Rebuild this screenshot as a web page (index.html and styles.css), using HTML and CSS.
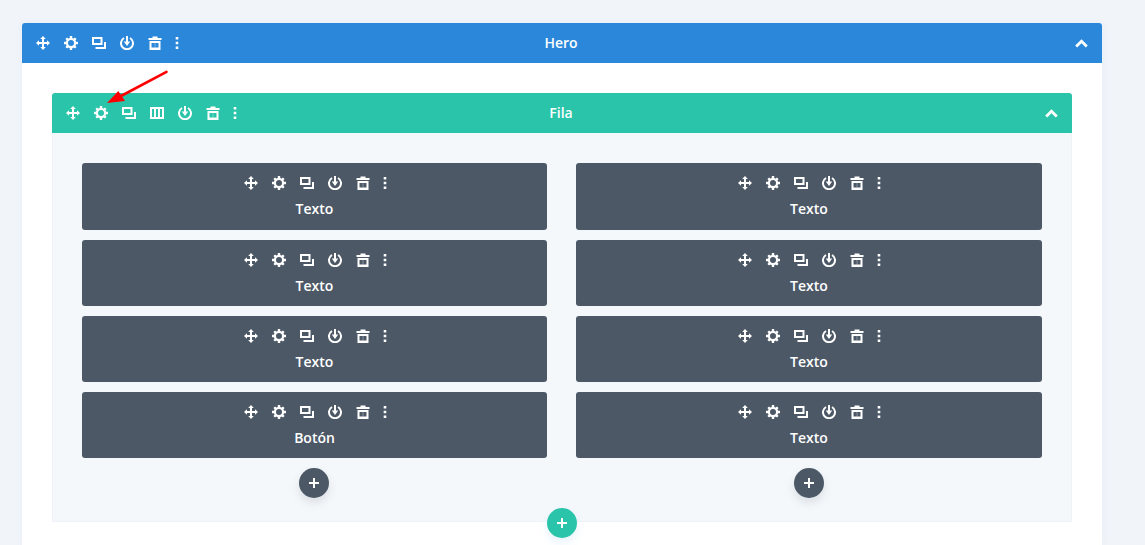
FILE: index.html
```html
<!DOCTYPE html>
<html lang="es">
<head>
<meta charset="utf-8">
<title>Hero</title>
<link rel="stylesheet" href="styles.css">
</head>
<body>
<svg class="defs" width="0" height="0" aria-hidden="true">
  <symbol id="i-move" viewBox="0 0 14 14">
    <path d="M6 3h2v3h3V4.200L14 7l-3 2.800V8H8v3h1.800L7 14l-2.800-3H6V8H3v1.800L0 7l3-2.800V6h3V3H4.200L7 0l2.800 3z" fill="currentColor"/>
  </symbol>
  <symbol id="i-gear" viewBox="0 0 14 14">
    <circle cx="7" cy="7" r="4.100" fill="none" stroke="currentColor" stroke-width="2.200"/>
    <path d="M5.800 0h2.400v3H5.800zM5.800 11h2.400v3H5.800zM0 5.800h3v2.400H0zM11 5.800h3v2.400h-3z" fill="currentColor"/>
    <path d="M1.400 3.100l1.700-1.700 2.100 2.100-1.700 1.700zM8.800 10.500l1.700-1.700 2.100 2.100-1.700 1.700zM10.900 1.400l1.700 1.700-2.100 2.100-1.700-1.700zM3.500 8.800l1.700 1.700-2.100 2.100-1.700-1.700z" fill="currentColor"/>
  </symbol>
  <symbol id="i-copy" viewBox="0 0 14 14">
    <path fill-rule="evenodd" d="M0 1h10.500v8H0zM2 3v4h6.500V3z" fill="currentColor"/>
    <path d="M12 6h2v7H3.500v-2H12z" fill="currentColor"/>
  </symbol>
  <symbol id="i-cols" viewBox="0 0 14 14">
    <path fill-rule="evenodd" d="M0 1h14v12H0zM2 3v8h2V3zM6 3v8h2V3zM10 3v8h2V3z" fill="currentColor"/>
  </symbol>
  <symbol id="i-power" viewBox="0 0 14 14">
    <path d="M4 2A6 6 0 1 0 10 2" fill="none" stroke="currentColor" stroke-width="2"/>
    <path d="M6 0h2v5.500h2.200L7 10 3.800 5.500H6z" fill="currentColor"/>
  </symbol>
  <symbol id="i-trash" viewBox="0 0 14 14">
    <path fill-rule="evenodd" d="M4.500 0.500h5V2h4v2H.5V2h4zM1.500 5h11v9h-11zM3.500 7v4.500h7V7z" fill="currentColor"/>
    <path d="M6.500 7h1v4.500h-1z" fill="currentColor" opacity="0.35"/>
  </symbol>
  <symbol id="i-dots" viewBox="0 0 4 14">
    <path d="M.7 1h2.600v2.600H.7zM.7 5.700h2.600v2.600H.7zM.7 10.400h2.600V13H.7z" fill="currentColor"/>
  </symbol>
  <symbol id="i-chev" viewBox="0 0 13 9">
    <path d="M1.200 7.600L6.500 2.300l5.300 5.300" fill="none" stroke="currentColor" stroke-width="2.800"/>
  </symbol>
  <symbol id="i-plus" viewBox="0 0 10 10">
    <path d="M4 0h2v4h4v2H6v4H4V6H0V4h4z" fill="currentColor"/>
  </symbol>
</svg>

<section class="section">
  <header class="bar bar-blue">
    <div class="tools">
      <span class="tool"><svg class="ico"><use href="#i-move"/></svg></span>
      <span class="tool"><svg class="ico"><use href="#i-gear"/></svg></span>
      <span class="tool"><svg class="ico"><use href="#i-copy"/></svg></span>
      <span class="tool"><svg class="ico"><use href="#i-power"/></svg></span>
      <span class="tool"><svg class="ico"><use href="#i-trash"/></svg></span>
      <span class="tool tool-dots"><svg class="ico-dots"><use href="#i-dots"/></svg></span>
    </div>
    <div class="bar-title">Hero</div>
    <div class="bar-end"><svg class="chev"><use href="#i-chev"/></svg></div>
  </header>

  <div class="section-body">
    <div class="row">
      <header class="bar bar-green">
        <div class="tools">
          <span class="tool"><svg class="ico"><use href="#i-move"/></svg></span>
          <span class="tool"><svg class="ico"><use href="#i-gear"/></svg></span>
          <span class="tool"><svg class="ico"><use href="#i-copy"/></svg></span>
          <span class="tool"><svg class="ico"><use href="#i-cols"/></svg></span>
          <span class="tool"><svg class="ico"><use href="#i-power"/></svg></span>
          <span class="tool"><svg class="ico"><use href="#i-trash"/></svg></span>
          <span class="tool tool-dots"><svg class="ico-dots"><use href="#i-dots"/></svg></span>
        </div>
        <div class="bar-title">Fila</div>
        <div class="bar-end"><svg class="chev"><use href="#i-chev"/></svg></div>
      </header>

      <div class="row-body">
        <div class="col">
          <div class="module"><div class="tools"><span class="tool"><svg class="ico"><use href="#i-move"/></svg></span><span class="tool"><svg class="ico"><use href="#i-gear"/></svg></span><span class="tool"><svg class="ico"><use href="#i-copy"/></svg></span><span class="tool"><svg class="ico"><use href="#i-power"/></svg></span><span class="tool"><svg class="ico"><use href="#i-trash"/></svg></span><span class="tool tool-dots"><svg class="ico-dots"><use href="#i-dots"/></svg></span></div><div class="module-name">Texto</div></div>
          <div class="module"><div class="tools"><span class="tool"><svg class="ico"><use href="#i-move"/></svg></span><span class="tool"><svg class="ico"><use href="#i-gear"/></svg></span><span class="tool"><svg class="ico"><use href="#i-copy"/></svg></span><span class="tool"><svg class="ico"><use href="#i-power"/></svg></span><span class="tool"><svg class="ico"><use href="#i-trash"/></svg></span><span class="tool tool-dots"><svg class="ico-dots"><use href="#i-dots"/></svg></span></div><div class="module-name">Texto</div></div>
          <div class="module"><div class="tools"><span class="tool"><svg class="ico"><use href="#i-move"/></svg></span><span class="tool"><svg class="ico"><use href="#i-gear"/></svg></span><span class="tool"><svg class="ico"><use href="#i-copy"/></svg></span><span class="tool"><svg class="ico"><use href="#i-power"/></svg></span><span class="tool"><svg class="ico"><use href="#i-trash"/></svg></span><span class="tool tool-dots"><svg class="ico-dots"><use href="#i-dots"/></svg></span></div><div class="module-name">Texto</div></div>
          <div class="module"><div class="tools"><span class="tool"><svg class="ico"><use href="#i-move"/></svg></span><span class="tool"><svg class="ico"><use href="#i-gear"/></svg></span><span class="tool"><svg class="ico"><use href="#i-copy"/></svg></span><span class="tool"><svg class="ico"><use href="#i-power"/></svg></span><span class="tool"><svg class="ico"><use href="#i-trash"/></svg></span><span class="tool tool-dots"><svg class="ico-dots"><use href="#i-dots"/></svg></span></div><div class="module-name">Botón</div></div>
          <div class="add add-dark"><svg class="plus"><use href="#i-plus"/></svg></div>
        </div>
        <div class="col">
          <div class="module"><div class="tools"><span class="tool"><svg class="ico"><use href="#i-move"/></svg></span><span class="tool"><svg class="ico"><use href="#i-gear"/></svg></span><span class="tool"><svg class="ico"><use href="#i-copy"/></svg></span><span class="tool"><svg class="ico"><use href="#i-power"/></svg></span><span class="tool"><svg class="ico"><use href="#i-trash"/></svg></span><span class="tool tool-dots"><svg class="ico-dots"><use href="#i-dots"/></svg></span></div><div class="module-name">Texto</div></div>
          <div class="module"><div class="tools"><span class="tool"><svg class="ico"><use href="#i-move"/></svg></span><span class="tool"><svg class="ico"><use href="#i-gear"/></svg></span><span class="tool"><svg class="ico"><use href="#i-copy"/></svg></span><span class="tool"><svg class="ico"><use href="#i-power"/></svg></span><span class="tool"><svg class="ico"><use href="#i-trash"/></svg></span><span class="tool tool-dots"><svg class="ico-dots"><use href="#i-dots"/></svg></span></div><div class="module-name">Texto</div></div>
          <div class="module"><div class="tools"><span class="tool"><svg class="ico"><use href="#i-move"/></svg></span><span class="tool"><svg class="ico"><use href="#i-gear"/></svg></span><span class="tool"><svg class="ico"><use href="#i-copy"/></svg></span><span class="tool"><svg class="ico"><use href="#i-power"/></svg></span><span class="tool"><svg class="ico"><use href="#i-trash"/></svg></span><span class="tool tool-dots"><svg class="ico-dots"><use href="#i-dots"/></svg></span></div><div class="module-name">Texto</div></div>
          <div class="module"><div class="tools"><span class="tool"><svg class="ico"><use href="#i-move"/></svg></span><span class="tool"><svg class="ico"><use href="#i-gear"/></svg></span><span class="tool"><svg class="ico"><use href="#i-copy"/></svg></span><span class="tool"><svg class="ico"><use href="#i-power"/></svg></span><span class="tool"><svg class="ico"><use href="#i-trash"/></svg></span><span class="tool tool-dots"><svg class="ico-dots"><use href="#i-dots"/></svg></span></div><div class="module-name">Texto</div></div>
          <div class="add add-dark"><svg class="plus"><use href="#i-plus"/></svg></div>
        </div>
      </div>
      <div class="add add-green"><svg class="plus"><use href="#i-plus"/></svg></div>
    </div>
  </div>

  <svg class="arrow" width="64" height="38" viewBox="0 0 64 38" aria-hidden="true">
    <path d="M60.500 1.800L15 26" fill="none" stroke="#f00" stroke-width="2.600" stroke-linecap="round"/>
    <path d="M1 33L12.300 21 19 31z" fill="#f00"/>
  </svg>
</section>
</body>
</html>
```
FILE: styles.css
```css
* { box-sizing: border-box; }

html, body {
  margin: 0;
  height: 545px;
  overflow: hidden;
}

body {
  background: #f1f4f9;
  padding: 23px 43px 0 22px;
  font-family: "Open Sans", "Liberation Sans", sans-serif;
  color: #fff;
}

.defs { position: absolute; }

.section {
  position: relative;
  width: 1080px;
  background: #fff;
  border-radius: 3px 3px 0 0;
  box-shadow: 0 0 8px rgba(43, 135, 218, 0.05);
}

.bar {
  display: flex;
  align-items: center;
  height: 40px;
  padding: 0 7px;
  border-radius: 3px 3px 0 0;
}

.bar-blue { background: #2b87da; }
.bar-green { background: #29c4a9; }

.tools {
  display: flex;
  align-items: center;
  flex: 1 1 0;
}

.tool {
  display: flex;
  justify-content: center;
  width: 28px;
  flex: none;
}

.tool-dots { width: 16px; }

.ico { width: 14px; height: 14px; display: block; }
.ico-dots { width: 4px; height: 14px; display: block; }

.bar-title {
  padding-left: 5px;
  font-size: 14px;
  font-weight: 600;
  line-height: 20px;
}

.bar-end {
  flex: 1 1 0;
  display: flex;
  justify-content: flex-end;
  padding-right: 7px;
}

.chev { width: 13px; height: 9px; display: block; }

.section-body { padding: 30px 30px 23px; }

.row { position: relative; }

.row-body {
  display: grid;
  grid-template-columns: 465px 466px;
  column-gap: 29px;
  padding: 30px 29px 23px 29px;
  background: #f5f8fb;
  border: 1px solid #eff3f9;
  border-top: 0;
}

.col {
  display: flex;
  flex-direction: column;
  align-items: stretch;
  row-gap: 10px;
}

.module {
  height: 66px;
  padding-top: 13px;
  background: #4c5866;
  border-radius: 3px;
}

.module:first-child { height: 67px; }

.module .tools { justify-content: center; height: 14px; }

.module-name {
  margin-top: 9px;
  font-size: 14px;
  font-weight: 600;
  line-height: 20px;
  text-align: center;
}

.add {
  display: flex;
  align-items: center;
  justify-content: center;
  width: 30px;
  height: 30px;
  border-radius: 50%;
}

.add-dark {
  align-self: center;
  background: #4c5866;
  box-shadow: 0 5px 10px rgba(76, 88, 102, 0.15);
}

.col:first-child .add-dark { margin-right: 1px; }

.add-green {
  position: absolute;
  left: 495px;
  bottom: -16px;
  background: #29c4a9;
  box-shadow: 0 5px 10px rgba(43, 135, 218, 0.1);
}

.plus { width: 10px; height: 10px; display: block; }

.arrow {
  position: absolute;
  left: 84px;
  top: 47px;
}
```
